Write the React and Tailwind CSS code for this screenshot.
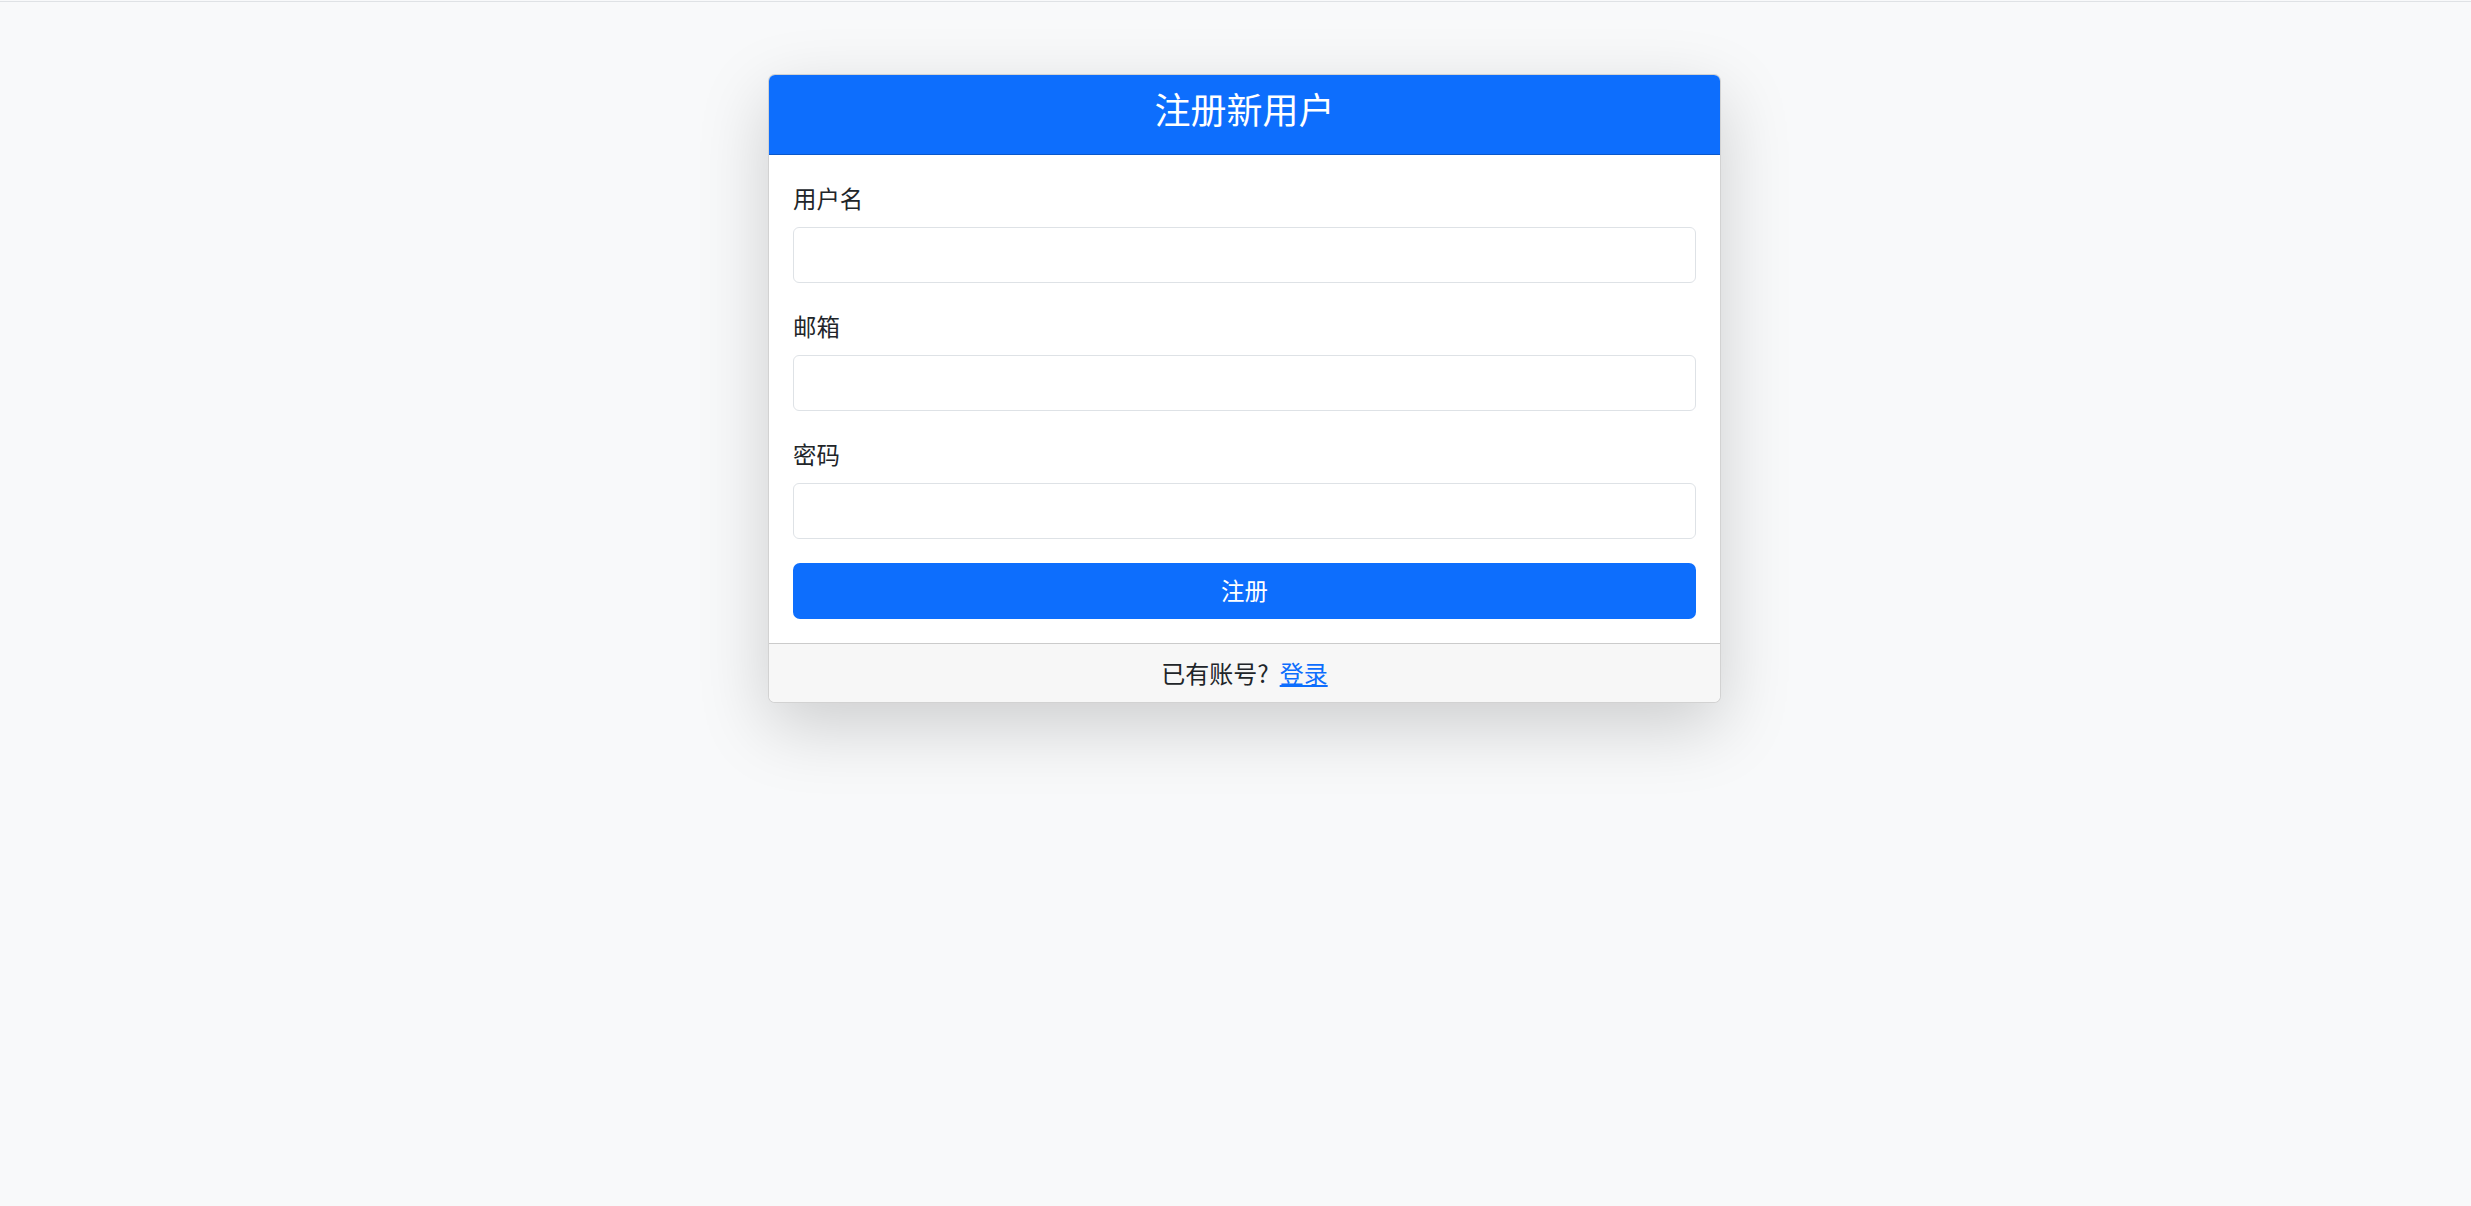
import { useState } from 'react';

const fields = [
  { id: 'username', label: '用户名', type: 'text' },
  { id: 'email', label: '邮箱', type: 'email' },
  { id: 'password', label: '密码', type: 'password' },
];

function Field({ id, label, type, value, onChange, last }) {
  return (
    <div className={last ? '' : 'mb-[26px]'}>
      <label htmlFor={id} className="mb-[11px] block text-[23.4px] leading-[35px] text-[#212529]">
        {label}
      </label>
      <input
        id={id}
        type={type}
        value={value}
        onChange={(e) => onChange(id, e.target.value)}
        className="block h-[56px] w-full rounded-[6px] border border-[#dee2e6] bg-white px-[18px] text-[23.4px] text-[#212529] outline-none"
      />
    </div>
  );
}

export default function App() {
  const [form, setForm] = useState({ username: '', email: '', password: '' });

  const update = (key, value) => setForm((prev) => ({ ...prev, [key]: value }));

  return (
    <div className="min-h-screen bg-[#f8f9fa] pt-[1px] font-['Noto_Sans_CJK_SC','Noto_Sans',sans-serif]">
      <div className="h-[1px] bg-[#dfe2e5]" />
      <div className="flex justify-center pl-[18px] pt-[72px]">
        <div className="w-[953px] overflow-hidden rounded-[7px] border border-black/[0.175] bg-white shadow-[0_23px_70px_rgba(0,0,0,0.175)]">
          <div className="h-[80px] border-b border-black/[0.2] bg-[#0d6efd] pt-[12px] text-center">
            <h4 className="text-[36px] leading-[42px] text-white">注册新用户</h4>
          </div>

          <form className="px-[24px] pb-[24px] pt-[26px]" onSubmit={(e) => e.preventDefault()}>
            {fields.map((field, i) => (
              <Field
                key={field.id}
                {...field}
                value={form[field.id]}
                onChange={update}
                last={i === fields.length - 1}
              />
            ))}
            <button
              type="submit"
              className="mt-[24px] block h-[56px] w-full rounded-[7px] bg-[#0d6efd] text-[23.4px] text-white"
            >
              注册
            </button>
          </form>

          <div className="h-[59px] border-t border-black/[0.175] bg-[#f7f7f7] text-center text-[24px] leading-[58px] text-[#212529]">
            已有账号?<a href="#" className="ml-[11px] text-[#0d6efd] underline">登录</a>
          </div>
        </div>
      </div>
    </div>
  );
}
